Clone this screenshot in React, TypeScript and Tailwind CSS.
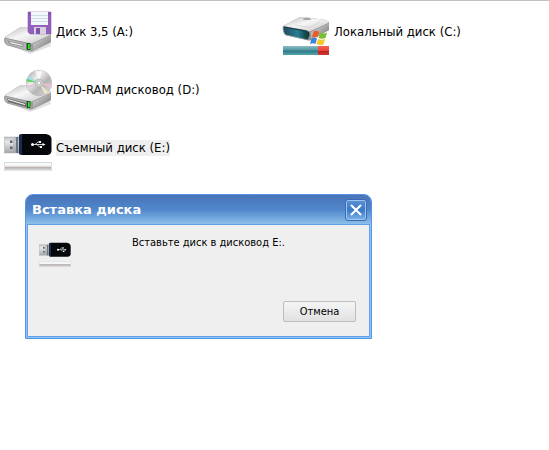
import React from 'react';

function DriveBody() {
  return (
    <>
      <path d="M3 36 L26 46 L47 38 L46 34Z" fill="#c4c4c4" opacity="0.5" />
      <path d="M1 29 L15 20 Q17 19 20 19 L45 24 Q47 25 47 28 V34 L29 43 Q27 44 25 43 L3 37 Q0 35 0 32Z" fill="#9a9a9a" />
      <path d="M1 29 L15 20 Q17 19 20 19 L45 24 Q47 25 46 27 L29 35 Q27 36 25 35 L2 30Z" fill="url(#driveTop)" />
      <path d="M1 30 L25 36 Q28 37 28 40 L27 43 L25 43 L3 37 Q0 35 1 30Z" fill="#b4b4b4" stroke="#8e8e8e" strokeWidth="0.6" />
      <path d="M29 36 L47 27 V34 L29 43Z" fill="url(#driveSide)" />
      <rect x="22.500" y="35" width="4" height="7" rx="1" fill="#155815" />
      <rect x="24" y="36" width="1.700" height="5" fill="#3de02a" />
    </>
  );
}

function Gradients() {
  return (
    <svg className="absolute size-0" aria-hidden="true">
      <defs>
        <linearGradient id="driveTop" x1="0" y1="0" x2="1" y2="1">
          <stop offset="0" stopColor="#b9b9b9" />
          <stop offset="0.45" stopColor="#f6f6f6" />
          <stop offset="0.75" stopColor="#dcdcdc" />
          <stop offset="1" stopColor="#a8a8a8" />
        </linearGradient>
        <linearGradient id="driveSide" x1="0" y1="0" x2="1" y2="1">
          <stop offset="0" stopColor="#e2e2e2" />
          <stop offset="1" stopColor="#6f6f6f" />
        </linearGradient>
        <linearGradient id="disc" x1="0" y1="0" x2="1" y2="1">
          <stop offset="0" stopColor="#a0a0a0" />
          <stop offset="0.35" stopColor="#ececec" />
          <stop offset="0.6" stopColor="#b5b5b5" />
          <stop offset="1" stopColor="#dedede" />
        </linearGradient>
        <linearGradient id="tealBar" x1="0" y1="0" x2="0" y2="1">
          <stop offset="0" stopColor="#8fbcc3" />
          <stop offset="0.45" stopColor="#4f98a2" />
          <stop offset="0.55" stopColor="#2e7885" />
          <stop offset="1" stopColor="#56a5ae" />
        </linearGradient>
        <linearGradient id="redBar" x1="0" y1="0" x2="0" y2="1">
          <stop offset="0" stopColor="#f5604f" />
          <stop offset="0.5" stopColor="#ee4538" />
          <stop offset="0.6" stopColor="#b92323" />
          <stop offset="1" stopColor="#d43a34" />
        </linearGradient>
        <linearGradient id="bay" x1="0" y1="0" x2="1" y2="0">
          <stop offset="0" stopColor="#23495f" />
          <stop offset="0.55" stopColor="#258090" />
          <stop offset="1" stopColor="#0e2733" />
        </linearGradient>
        <linearGradient id="emptyBar" x1="0" y1="0" x2="0" y2="1">
          <stop offset="0" stopColor="#ffffff" />
          <stop offset="0.48" stopColor="#f4f2f2" />
          <stop offset="0.54" stopColor="#b3abac" />
          <stop offset="0.7" stopColor="#c3bdbe" />
          <stop offset="1" stopColor="#eeecec" />
        </linearGradient>
        <linearGradient id="plug" x1="0" y1="0" x2="0" y2="1">
          <stop offset="0" stopColor="#bcbfc2" />
          <stop offset="0.3" stopColor="#e9e9e9" />
          <stop offset="1" stopColor="#a2a5a9" />
        </linearGradient>
      </defs>
    </svg>
  );
}

function FloppyDriveIcon() {
  return (
    <svg viewBox="0 0 48 48" className="size-12 shrink-0" aria-hidden="true">
      <DriveBody />
      <path d="M3 32.500 L20 36.500 L19 39 L6 36Z" fill="#858585" />
      <path d="M5 33.500 L19 37 L18 38 L7 35.500Z" fill="#eeeeee" />
      <path d="M24 4 H47 V26 H26 L24 24Z" fill="#9560bd" stroke="#7a48a5" strokeWidth="0.5" />
      <rect x="27" y="4" width="17" height="13" fill="#f5f8fb" />
      <path d="M27 7.500H44M27 10.500H44M27 13.500H44" stroke="#c4d4df" strokeWidth="0.8" />
      <rect x="30" y="19" width="12" height="7" fill="#d6d1df" />
      <rect x="32" y="20" width="4" height="6" fill="#8352ad" />
      <path d="M25 6h1M45 6h1" stroke="#5c3485" />
    </svg>
  );
}

function DvdDriveIcon() {
  return (
    <svg viewBox="0 0 48 48" className="size-12 shrink-0" aria-hidden="true">
      <DriveBody />
      <path d="M3 32 L22 37 V41 L4 36Z" fill="#6c6c6c" />
      <path d="M4 33.500 L21 38.500" stroke="#f5f5f5" strokeWidth="1.200" />
      <circle cx="35" cy="17" r="12.800" fill="url(#disc)" stroke="#b0b0b0" strokeWidth="0.5" />
      <path d="M35 17 L23 12.500 L22.500 15.500Z" fill="#5fd66a" />
      <path d="M35 17 L25 10 L23 12.500Z" fill="#a9dcea" />
      <path d="M35 17 L23 20 L24 22Z" fill="#e3c0da" />
      <path d="M35 17 L47.500 18 L46.500 22Z" fill="#e9bccf" />
      <path d="M35 17 L44 26 L41 28Z" fill="#efe9c3" />
      <path d="M35 17 L31 5 L38 4.500Z" fill="#ffffff" opacity="0.7" />
      <circle cx="35" cy="17" r="4" fill="#d0d0d0" stroke="#aaa" strokeWidth="0.6" />
      <circle cx="35" cy="17" r="1.700" fill="#fff" stroke="#999" strokeWidth="0.5" />
    </svg>
  );
}

function HardDiskIcon() {
  return (
    <svg viewBox="0 0 48 48" className="size-12 shrink-0" aria-hidden="true">
      <path d="M1 18 L16 10 Q18 9 21 9 L44 12 Q47 13 47 16 V22 L29 32 Q27 33 25 32 L3 27 Q1 25 1 18Z" fill="#8f8f8f" />
      <path d="M1 18 L16 10 Q18 9 21 9 L44 12 Q47 13 46 15 L29 23 Q27 24 25 23Z" fill="url(#driveTop)" />
      <path d="M29 24 L47 15 V22 L29 32Z" fill="url(#driveSide)" />
      <path d="M1 18.500 L25 22.500 Q28 23 28 27 L26 32 L4 27 Q1 25 1 18.500Z" fill="url(#bay)" stroke="#9da5a9" strokeWidth="0.7" />
      <path d="M2 19 L24 23" stroke="#17323f" strokeWidth="1" />
      <ellipse cx="25" cy="11" rx="4" ry="1" fill="#a2a2a2" />
      <path d="M13 17 L28 19.500 L38 14" fill="none" stroke="#c6c6c6" strokeWidth="0.5" />
      <path d="M25 25V30" stroke="#1c4a20" strokeWidth="2" />
      <path d="M31.500 23.500 Q34.500 22 37 24 L35.500 29.500 Q33 28 30 29.500Z" fill="#ee5726" />
      <path d="M38 24.500 Q41 26.500 45 24.500 L43.500 30 Q40 31.500 36.500 30Z" fill="#77bd35" />
      <path d="M29.500 30.500 Q32.500 29 35 30.500 L33.500 36 Q31 34.500 28 36Z" fill="#3c83dc" />
      <path d="M36 31 Q39 32.500 43 31 L41.500 36.500 Q38 38 34.500 36Z" fill="#f8c92d" />
      <rect x="1" y="38" width="35" height="9" fill="url(#tealBar)" />
      <rect x="36" y="38" width="11" height="9" fill="url(#redBar)" />
    </svg>
  );
}

function UsbStickIcon({ className }: { className: string }) {
  return (
    <svg viewBox="0 0 48 48" className={className} aria-hidden="true">
      <rect x="0.500" y="13" width="15" height="16" fill="url(#plug)" stroke="#b0b3b6" strokeWidth="0.6" />
      <path d="M6 16.500h2.500v2.500H6zM6 22.500h2.500v2.500H6z" fill="#5f656c" />
      <path d="M10 15v12" stroke="#a2a6ac" strokeWidth="1" />
      <path d="M13 13v16" stroke="#6d7683" strokeWidth="2.500" />
      <path d="M15 11 L18 10 H42 Q47.500 11 47.500 15 V27 Q47 31 43 31 H18 L15 30Z" fill="#05070b" />
      <path d="M15 11 L18 10 V31 L15 30Z" fill="#1b2a4d" />
      <path d="M28 20.500H39M31 20.500L34 18H35.500M33 20.500L35.500 23H37" fill="none" stroke="#fff" strokeWidth="0.8" />
      <circle cx="28.500" cy="20.500" r="1.500" fill="#fff" />
      <path d="M38.500 19 L41.500 20.500 L38.500 22Z M35 17h2v2h-2zM36 22h2v2h-2z" fill="#fff" />
      <rect x="0" y="38" width="48" height="9" fill="url(#emptyBar)" />
      <path d="M0 38.500H48" stroke="#cddde2" />
      <path d="M0 46.500H48" stroke="#e2e8ea" />
      <path d="M0.500 38V47M47.500 38V47" stroke="#d4dcdf" />
    </svg>
  );
}

function Drive({ icon, name, selected = false }: { icon: React.ReactNode; name: string; selected?: boolean }) {
  return (
    <li className="flex items-center gap-1">
      {icon}
      <span className={selected ? 'bg-[#efefef] leading-4' : 'leading-4'}>{name}</span>
    </li>
  );
}

export default function App() {
  return (
    <main className="min-h-screen border-t border-[#c0c0c0] bg-white pt-[7px] font-['DejaVu_Sans_Condensed','DejaVu_Sans',sans-serif] text-[13px] text-black">
      <Gradients />
      <div className="flex gap-[30px] pl-1">
        <ul className="flex w-[248px] flex-col gap-[10px]">
          <Drive icon={<FloppyDriveIcon />} name="Диск 3,5 (A:)" />
          <Drive icon={<DvdDriveIcon />} name="DVD-RAM дисковод (D:)" />
          <Drive icon={<UsbStickIcon className="size-12 shrink-0" />} name="Съемный диск (E:)" selected />
        </ul>
        <ul>
          <Drive icon={<HardDiskIcon />} name="Локальный диск (C:)" />
        </ul>
      </div>

      <section
        role="dialog"
        aria-labelledby="dialog-title"
        className="mt-[22px] ml-[25px] w-[347px] max-w-full overflow-hidden rounded-t-lg border border-[#5595e4] bg-[#8fc3f8]"
      >
        <header className="flex h-[29px] items-center justify-between bg-linear-to-b from-[#4a74b8] via-[#4f86cb] to-[#8cc0ea] pr-1 pl-[6px]">
          <h1 id="dialog-title" className="font-['DejaVu_Sans',sans-serif] text-[13px] leading-4 font-bold text-white">
            Вставка диска
          </h1>
          <button
            type="button"
            aria-label="Закрыть"
            className="flex size-[22px] items-center justify-center rounded-[3px] border border-[#3f68b4] bg-linear-to-b from-[#5c92d4] via-[#3b78c6] to-[#7eb5e8] shadow-[inset_0_0_0_1px_#9cc6f0]"
          >
            <svg viewBox="0 0 12 12" className="size-3" aria-hidden="true">
              <path d="M1 1L11 11M11 1L1 11" stroke="#fff" strokeWidth="2" />
            </svg>
          </button>
        </header>
        <div className="mx-px mb-px border border-[#62a0e8] bg-[#efefef] pr-[13px] pb-[14px] pl-[11px] text-[11px] leading-[14px]">
          <div className="flex pt-[11px]">
            <UsbStickIcon className="size-8 shrink-0" />
            <p className="ml-[61px]">Вставьте диск в дисковод E:.</p>
          </div>
          <div className="mt-[33px] flex justify-end">
            <button
              type="button"
              className="h-[21px] w-[73px] rounded-[2px] border border-[#bdbdbd] bg-linear-to-b from-[#f5f5f5] to-[#e1e1e1]"
            >
              Отмена
            </button>
          </div>
        </div>
      </section>
    </main>
  );
}
